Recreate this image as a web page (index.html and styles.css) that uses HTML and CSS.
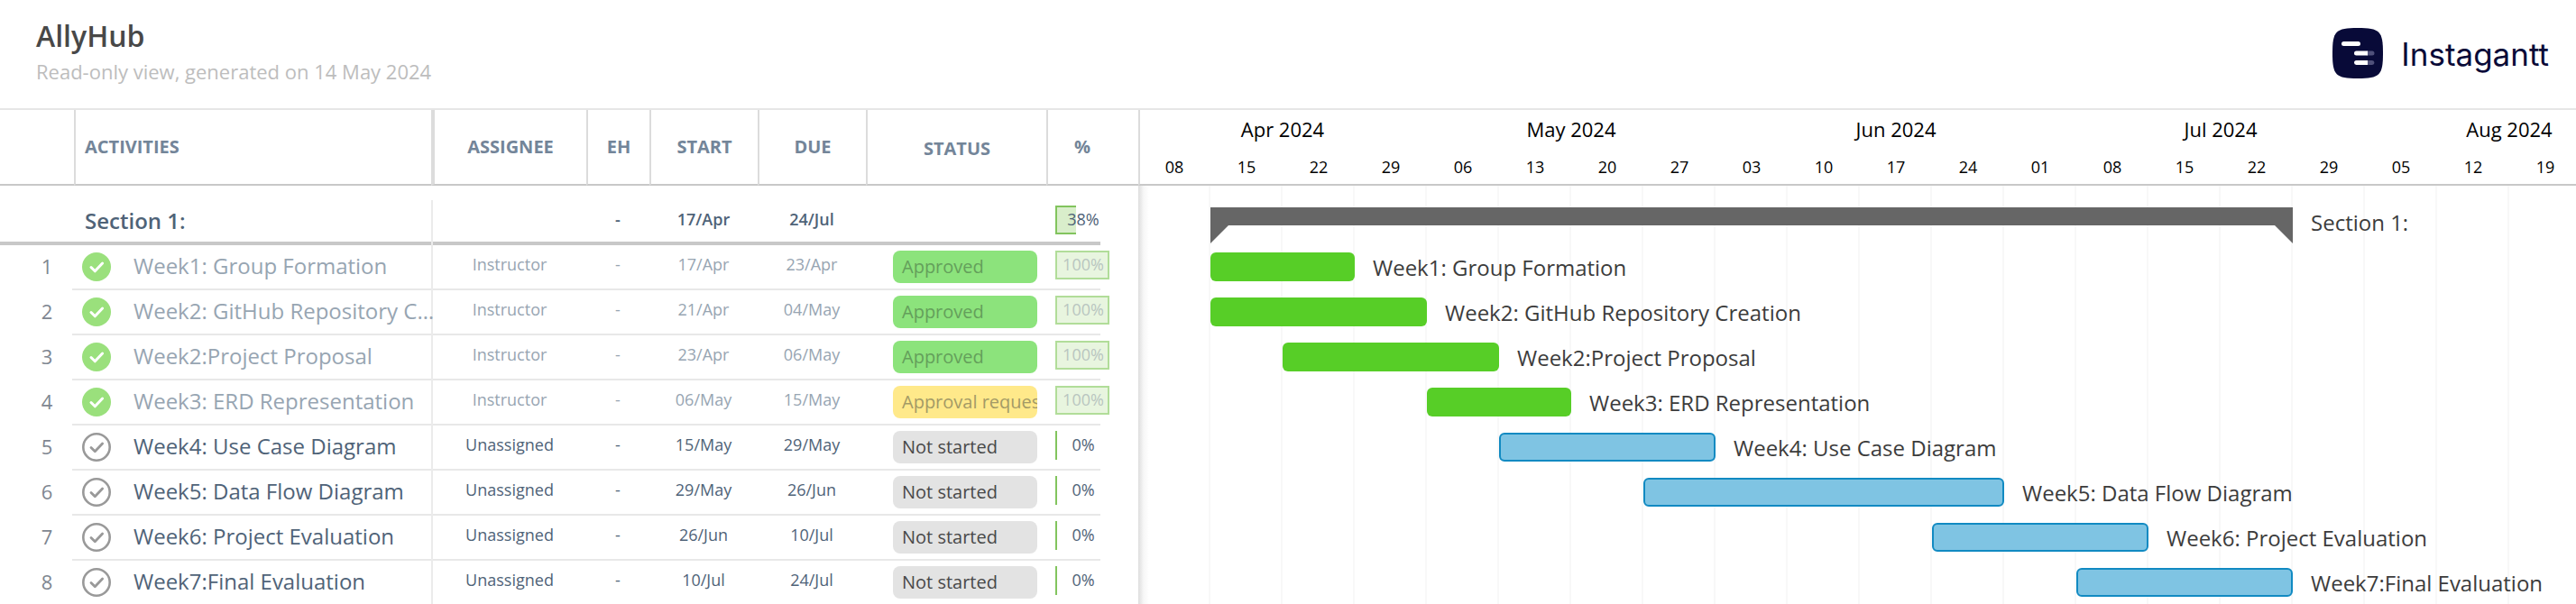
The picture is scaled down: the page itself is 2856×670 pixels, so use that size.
FILE: index.html
```html
<!DOCTYPE html>
<html lang="en">
<head>
<meta charset="utf-8">
<title>AllyHub</title>
<link rel="stylesheet" href="styles.css">
</head>
<body>
<svg class="sprite" aria-hidden="true">
  <symbol id="done" viewBox="0 0 32 32"><circle cx="16" cy="16" r="16" fill="#9ae07c"/><path d="M10 16.5 14.3 20.8 22.6 12" fill="none" stroke="#fff" stroke-width="3" stroke-linecap="round" stroke-linejoin="round"/></symbol>
  <symbol id="open" viewBox="0 0 32 32"><circle cx="16" cy="16" r="14.7" fill="#fff" stroke="#999" stroke-width="2.6"/><path d="M10 16.5 14.3 20.8 22.6 12" fill="none" stroke="#999" stroke-width="2.8" stroke-linecap="round" stroke-linejoin="round"/></symbol>
</svg>
<div class="app">
  <header class="top">
    <div>
      <h1 class="title">AllyHub</h1>
      <p class="subtitle">Read-only view, generated on 14 May 2024</p>
    </div>
    <div class="brand">
      <svg class="brand-mark" viewBox="0 0 56 56" aria-hidden="true">
        <path d="M28 0C52.500 0 56 3.500 56 28S52.500 56 28 56 0 52.500 0 28 3.500 0 28 0Z" fill="#080a38"/>
        <rect x="10" y="15" width="21" height="5" rx="2.5" fill="#fff"/>
        <path d="M38 25.500h6a2.500 2.500 0 0 1 0 5h-6zM38 36h6a2.500 2.500 0 0 1 0 5h-6z" fill="#4f507a"/>
        <path d="M26.500 25.500H39v5H26.500a2.500 2.500 0 0 1 0-5zM26.500 36H39v5H26.500a2.500 2.500 0 0 1 0-5z" fill="#fff"/>
      </svg>
      <span class="brand-name">Instagantt</span>
    </div>
  </header>
  <main class="board">
    <section class="list">
      <table class="tasks">
        <colgroup><col class="c-num"><col class="c-name"><col class="c-assignee"><col class="c-eh"><col class="c-date"><col class="c-date"><col class="c-status"><col class="c-pct"></colgroup>
        <thead>
          <tr><th></th><th class="h-name">ACTIVITIES</th><th>ASSIGNEE</th><th>EH</th><th>START</th><th>DUE</th><th class="h-status">STATUS</th><th class="h-pct">%</th></tr>
        </thead>
        <tbody>
          <tr class="spacer"><td colspan="8"></td></tr>
          <tr class="section"><td></td><td class="name">Section 1:</td><td></td><td>-</td><td>17/Apr</td><td>24/Jul</td><td></td><td class="pct"><div class="meter"><span class="fill" style="width:38%"></span><span class="val">38%</span></div></td></tr>
          <tr class="task done"><td class="num">1</td><td class="name"><div class="cell"><svg class="check"><use href="#done"/></svg><span class="label">Week1: Group Formation</span></div></td><td>Instructor</td><td>-</td><td>17/Apr</td><td>23/Apr</td><td class="status"><div class="pill green">Approved</div></td><td class="pct"><div class="meter"><span class="fill full" style="width:100%"></span><span class="val">100%</span></div></td></tr>
          <tr class="task done"><td class="num">2</td><td class="name"><div class="cell"><svg class="check"><use href="#done"/></svg><span class="label">Week2: GitHub Repository C…</span></div></td><td>Instructor</td><td>-</td><td>21/Apr</td><td>04/May</td><td class="status"><div class="pill green">Approved</div></td><td class="pct"><div class="meter"><span class="fill full" style="width:100%"></span><span class="val">100%</span></div></td></tr>
          <tr class="task done"><td class="num">3</td><td class="name"><div class="cell"><svg class="check"><use href="#done"/></svg><span class="label">Week2:Project Proposal</span></div></td><td>Instructor</td><td>-</td><td>23/Apr</td><td>06/May</td><td class="status"><div class="pill green">Approved</div></td><td class="pct"><div class="meter"><span class="fill full" style="width:100%"></span><span class="val">100%</span></div></td></tr>
          <tr class="task done"><td class="num">4</td><td class="name"><div class="cell"><svg class="check"><use href="#done"/></svg><span class="label">Week3: ERD Representation</span></div></td><td>Instructor</td><td>-</td><td>06/May</td><td>15/May</td><td class="status"><div class="pill yellow">Approval requested</div></td><td class="pct"><div class="meter"><span class="fill full" style="width:100%"></span><span class="val">100%</span></div></td></tr>
          <tr class="task"><td class="num">5</td><td class="name"><div class="cell"><svg class="check"><use href="#open"/></svg><span class="label">Week4: Use Case Diagram</span></div></td><td>Unassigned</td><td>-</td><td>15/May</td><td>29/May</td><td class="status"><div class="pill">Not started</div></td><td class="pct"><div class="meter"><span class="fill" style="width:0%"></span><span class="val">0%</span></div></td></tr>
          <tr class="task"><td class="num">6</td><td class="name"><div class="cell"><svg class="check"><use href="#open"/></svg><span class="label">Week5: Data Flow Diagram</span></div></td><td>Unassigned</td><td>-</td><td>29/May</td><td>26/Jun</td><td class="status"><div class="pill">Not started</div></td><td class="pct"><div class="meter"><span class="fill" style="width:0%"></span><span class="val">0%</span></div></td></tr>
          <tr class="task"><td class="num">7</td><td class="name"><div class="cell"><svg class="check"><use href="#open"/></svg><span class="label">Week6: Project Evaluation</span></div></td><td>Unassigned</td><td>-</td><td>26/Jun</td><td>10/Jul</td><td class="status"><div class="pill">Not started</div></td><td class="pct"><div class="meter"><span class="fill" style="width:0%"></span><span class="val">0%</span></div></td></tr>
          <tr class="task"><td class="num">8</td><td class="name"><div class="cell"><svg class="check"><use href="#open"/></svg><span class="label">Week7:Final Evaluation</span></div></td><td>Unassigned</td><td>-</td><td>10/Jul</td><td>24/Jul</td><td class="status"><div class="pill">Not started</div></td><td class="pct"><div class="meter"><span class="fill" style="width:0%"></span><span class="val">0%</span></div></td></tr>
        </tbody>
      </table>
    </section>
    <section class="chart">
      <div class="scale">
        <div class="weeks months"><span class="m4">Apr 2024</span><span class="m4">May 2024</span><span class="m5">Jun 2024</span><span class="m4">Jul 2024</span><span class="m4">Aug 2024</span></div>
        <div class="weeks days"><span>08</span><span>15</span><span>22</span><span>29</span><span>06</span><span>13</span><span>20</span><span>27</span><span>03</span><span>10</span><span>17</span><span>24</span><span>01</span><span>08</span><span>15</span><span>22</span><span>29</span><span>05</span><span>12</span><span>19</span></div>
      </div>
      <div class="plot">
        <div class="weeks row"><svg class="summary" style="grid-column:2 / span 15" aria-hidden="true"><rect width="100%" height="20"/><path d="M0 20h20L0 40z"/><svg x="100%" overflow="visible"><path d="M-20 20H0v20z"/></svg></svg><span class="caption">Section 1:</span></div>
        <div class="weeks row"><div class="bar complete" style="grid-column:2 / span 2"></div><span class="caption">Week1: Group Formation</span></div>
        <div class="weeks row"><div class="bar complete" style="grid-column:2 / span 3"></div><span class="caption">Week2: GitHub Repository Creation</span></div>
        <div class="weeks row"><div class="bar complete" style="grid-column:3 / span 3"></div><span class="caption">Week2:Project Proposal</span></div>
        <div class="weeks row"><div class="bar complete" style="grid-column:5 / span 2"></div><span class="caption">Week3: ERD Representation</span></div>
        <div class="weeks row"><div class="bar" style="grid-column:6 / span 3"></div><span class="caption">Week4: Use Case Diagram</span></div>
        <div class="weeks row"><div class="bar" style="grid-column:8 / span 5"></div><span class="caption">Week5: Data Flow Diagram</span></div>
        <div class="weeks row"><div class="bar" style="grid-column:12 / span 3"></div><span class="caption">Week6: Project Evaluation</span></div>
        <div class="weeks row"><div class="bar" style="grid-column:14 / span 3"></div><span class="caption">Week7:Final Evaluation</span></div>
      </div>
    </section>
  </main>
</div>
</body>
</html>
```
FILE: styles.css
```css
* { box-sizing: border-box; }
body { margin: 0; background: #fff; color: #4f6378; font-family: "Open Sans", "Noto Sans", sans-serif; font-size: 18px; }
.sprite { display: none; }
.app { height: 100vh; display: flex; flex-direction: column; overflow: hidden; }

.top { display: flex; justify-content: space-between; align-items: flex-start; height: 122px; flex: none; padding: 18px 30px 0 40px; border-bottom: 2px solid #e6e6e6; }
.title { margin: 0; color: #484848; font-size: 32px; font-weight: 600; line-height: 44px; }
.subtitle { margin: 0; color: #bdbdbd; font-size: 22px; line-height: 34px; }
.brand { display: flex; align-items: center; gap: 20px; padding-top: 12px; color: #0a0b38; }
.brand-mark { width: 56px; height: 56px; }
.brand-name { font-family: Inter, sans-serif; font-size: 35px; line-height: 56px; padding-top: 2px; }

.board { display: flex; flex: 1; min-height: 0; }
.list { width: 1262px; flex: none; }
.tasks { width: 100%; table-layout: fixed; border-collapse: separate; border-spacing: 0; }
.c-num { width: 82px; }
.c-name { width: 396px; }
.c-assignee { width: 172px; }
.c-eh { width: 70px; }
.c-date { width: 120px; }
.c-status { width: 200px; }
.c-pct { width: 102px; }
th { height: 84px; padding: 0 0 2px; color: #738599; font-size: 20px; font-weight: 700; border-left: 2px solid #dcdcdc; border-bottom: 2px solid #c8c8c8; }
th:first-child { border-left: 0; }
th:nth-child(3) { border-left-width: 4px; }
.h-name { text-align: left; padding-left: 10px; }
.h-status { padding: 2px 0 0; }
.h-pct { padding-right: 24px; }
td { height: 50px; padding: 0 0 8px; text-align: center; line-height: 24px; }
.spacer td { height: 16px; padding: 0; }
.section { font-weight: 600; background: linear-gradient(#c8c8c8, #c8c8c8) 0 100% / 1220px 4px no-repeat; }
.section .name { padding: 0 0 4px 12px; font-size: 24px; text-align: left; }
.section td:nth-child(3), .task td:nth-child(3) { border-left: 2px solid #ebebeb; }
.task { background: linear-gradient(#e8e8e8, #e8e8e8) 80px 100% / 1140px 2px no-repeat; }
.num { padding: 0 0 4px 22px; color: #7f8791; font-size: 22px; }
.task .name { padding: 0 0 2px 9px; font-size: 24px; }
.cell { display: flex; align-items: center; gap: 25px; text-align: left; }
.check { width: 32px; height: 32px; flex: none; }
.label { flex: 1; min-width: 0; padding-bottom: 2px; line-height: 34px; white-space: nowrap; }
.done { color: #97a5b2; }
.status { padding: 0 10px 2px 30px; }
.pill { height: 36px; padding: 0 10px; border-radius: 8px; background: #e3e3e3; color: #484848; font-size: 20px; line-height: 36px; text-align: left; white-space: nowrap; overflow: hidden; }
.pill.green { background: #8ce37c; color: #649f5b; }
.pill.yellow { background: #ffe98a; color: #a39a66; }
.pct { padding: 0 0 6px 10px; }
.meter { position: relative; width: 60px; height: 32px; }
.fill { position: absolute; inset: 0 auto 0 0; border: 2px solid #82c45e; border-right: 0; background: #d9eecb; }
.fill[style="width:0%"] { border-width: 0 0 0 2px; }
.fill.full { border: 2px solid #b1dd99; background: #e8f5df; }
.val { position: relative; display: block; padding-left: 2px; line-height: 30px; }
.section .val { font-weight: 500; }
.done .val { color: #b9c5bf; }

.chart { flex: 1; min-width: 0; display: flex; flex-direction: column; overflow: hidden; color: #3c3c3c; }
.weeks { display: grid; grid-template-columns: repeat(21, 80px); }
.scale { height: 84px; flex: none; border-left: 2px solid #dcdcdc; border-bottom: 2px solid #c8c8c8; color: #000; text-align: center; }
.scale .weeks { margin-left: -2px; }
.months { font-size: 22px; line-height: 42px; }
.m4 { grid-column: span 4; }
.m5 { grid-column: span 5; }
.days { line-height: 42px; }
.plot { flex: 1; padding-top: 16px; background: linear-gradient(90deg, #dedede, #f7f7f7 6px, #fff 12px) 0 0 / 12px 100% no-repeat, repeating-linear-gradient(90deg, transparent 0 78px, #f8f8f8 78px 80px); }
.row { height: 50px; align-items: start; padding-top: 8px; }
.bar { height: 32px; border: 2px solid #118ac2; border-radius: 6px; background: #7fc4e3; }
.bar.complete { border: 0; background: #57ce27; }
.summary { width: 100%; height: 40px; fill: #666; }
.caption { padding-left: 20px; font-size: 24px; line-height: 34px; white-space: nowrap; }
```
